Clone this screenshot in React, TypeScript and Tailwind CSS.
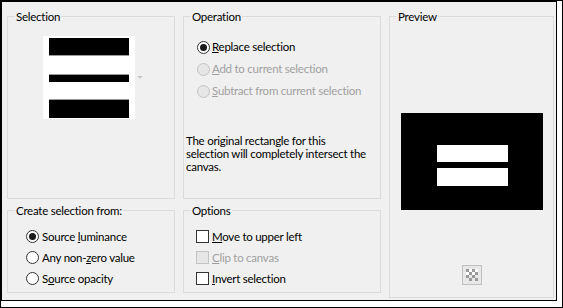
import React from "react";

function GroupBox({ title, className, children }: { title: string; className: string; children?: React.ReactNode }) {
  return (
    <div className={`relative border border-[#dcdcdc] ${className}`}>
      <span className="absolute left-[7px] top-[-8px] bg-[#f0f0f0] px-[1px] leading-[15px]">{title}</span>
      {children}
    </div>
  );
}

function Radio({ checked, disabled }: { checked?: boolean; disabled?: boolean }) {
  return (
    <span
      className={`flex h-[13px] w-[13px] shrink-0 items-center justify-center rounded-full border ${
        disabled ? "border-[#c4c4c4] bg-[#e6e6e6]" : "border-[#333] bg-white"
      }`}
    >
      {checked && <span className="h-[7px] w-[7px] rounded-full bg-[#1a1a1a]" />}
    </span>
  );
}

function Check({ disabled }: { disabled?: boolean }) {
  return (
    <span
      className={`h-[13px] w-[13px] shrink-0 border ${
        disabled ? "border-[#c4c4c4] bg-[#e6e6e6]" : "border-[#333] bg-white"
      }`}
    />
  );
}

function Row({ h, gap, disabled, control, children }: { h: string; gap: string; disabled?: boolean; control: React.ReactNode; children: React.ReactNode }) {
  return (
    <div className={`flex items-center ${h} ${gap} ${disabled ? "text-[#a0a0a0]" : "text-black"}`}>
      {control}
      <span className="whitespace-nowrap">{children}</span>
    </div>
  );
}

export default function App() {
  return (
    <div className="h-[308px] w-[563px] border border-black bg-white font-['Lato',sans-serif] text-[11.5px] tracking-[-0.25px] text-black">
      <div className="flex h-[300px] w-[556px] gap-[8px] border border-black bg-[#f0f0f0] pl-[5px] pt-[14px]">
        <div className="flex w-[168px] flex-col gap-[11px]">
          <GroupBox title="Selection" className="h-[183px] pl-[35px] pt-[19px]">
            <div className="flex items-center gap-[2px]">
              <svg width="92" height="83" viewBox="0 0 92 83">
                <rect width="92" height="83" fill="#fff" />
                <rect x="6" y="2" width="80" height="17" fill="#000" />
                <rect x="6" y="19" width="80" height="1" fill="#9a9a9a" />
                <rect x="6" y="38" width="80" height="1" fill="#9a9a9a" />
                <rect x="6" y="39" width="80" height="7" fill="#000" />
                <rect x="6" y="63" width="80" height="1" fill="#9a9a9a" />
                <rect x="6" y="64" width="80" height="18" fill="#000" />
              </svg>
              <svg width="6" height="4" viewBox="0 0 6 4">
                <path d="M0 0 L6 0 L3 3 Z" fill="#c8c8c8" />
              </svg>
            </div>
          </GroupBox>
          <GroupBox title="Create selection from:" className="h-[83px] pl-[18px] pt-[15px]">
            <Row h="h-[21px]" gap="gap-[3px]" control={<Radio checked />}>
              Source <u>l</u>uminance
            </Row>
            <Row h="h-[21px]" gap="gap-[3px]" control={<Radio />}>
              Any non-<u>z</u>ero value
            </Row>
            <Row h="h-[21px]" gap="gap-[3px]" control={<Radio />}>
              S<u>o</u>urce opacity
            </Row>
          </GroupBox>
        </div>

        <div className="flex w-[198px] flex-col gap-[11px]">
          <GroupBox title="Operation" className="h-[183px] pt-[19px]">
            <div className="pl-[13px]">
              <Row h="h-[22px]" gap="gap-[2px]" control={<Radio checked />}>
                <u>R</u>eplace selection
              </Row>
              <Row h="h-[22px]" gap="gap-[2px]" disabled control={<Radio disabled />}>
                <u>A</u>dd to current selection
              </Row>
              <Row h="h-[22px]" gap="gap-[2px]" disabled control={<Radio disabled />}>
                <u>S</u>ubtract from current selection
              </Row>
            </div>
            <p className="mt-[32px] pl-[2px] pr-[4px] leading-[13px]">
              The original rectangle for this
              <br />
              selection will completely intersect the
              <br />
              canvas.
            </p>
          </GroupBox>
          <GroupBox title="Options" className="h-[83px] pl-[12px] pt-[15px]">
            <Row h="h-[21px]" gap="gap-[3px]" control={<Check />}>
              <u>M</u>ove to upper left
            </Row>
            <Row h="h-[21px]" gap="gap-[3px]" disabled control={<Check disabled />}>
              <u>C</u>lip to canvas
            </Row>
            <Row h="h-[21px]" gap="gap-[3px]" control={<Check />}>
              <u>I</u>nvert selection
            </Row>
          </GroupBox>
        </div>

        <GroupBox title="Preview" className="flex h-[282px] w-[165px] flex-col items-center pt-[96px]">
          <svg width="142" height="97" viewBox="0 0 142 97">
            <rect width="142" height="97" fill="#000" />
            <rect x="36" y="32" width="71" height="17" fill="#fff" />
            <rect x="36" y="55" width="71" height="18" fill="#fff" />
          </svg>
          <svg className="mt-[55px]" width="20" height="20" viewBox="0 0 20 20">
            <rect x="0.5" y="0.5" width="19" height="19" fill="#e8e8e8" stroke="#c0c0c0" />
            <g fill="#9a9a9a">
              <rect x="4" y="4" width="3" height="3" />
              <rect x="10" y="4" width="3" height="3" />
              <rect x="7" y="7" width="3" height="3" />
              <rect x="13" y="7" width="3" height="3" />
              <rect x="4" y="10" width="3" height="3" />
              <rect x="10" y="10" width="3" height="3" />
              <rect x="7" y="13" width="3" height="3" />
              <rect x="13" y="13" width="3" height="3" />
            </g>
            <g fill="#fff">
              <rect x="7" y="4" width="3" height="3" />
              <rect x="13" y="4" width="3" height="3" />
              <rect x="4" y="7" width="3" height="3" />
              <rect x="10" y="7" width="3" height="3" />
            </g>
          </svg>
        </GroupBox>
      </div>
    </div>
  );
}
